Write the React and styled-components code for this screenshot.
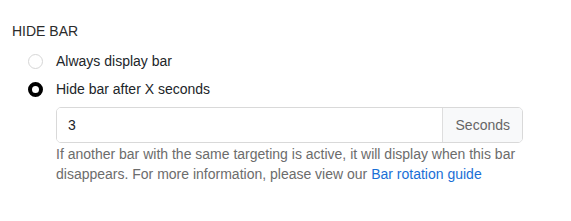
import React from "react";
import styled, { createGlobalStyle } from "styled-components";

const GlobalStyle = createGlobalStyle`
  body {
    margin: 0;
    background: #fff;
    font-family: "Liberation Sans", Arial, sans-serif;
  }
`;

const Section = styled.div`
  padding: 21px 12px 0 12px;
  width: 571px;
  box-sizing: border-box;
`;

const Heading = styled.div`
  font-size: 14px;
  line-height: 20px;
  color: #2b2b2b;
  margin-bottom: 10px;
`;

const Options = styled.div`
  display: flex;
  flex-direction: column;
  gap: 8px;
  padding-left: 16px;
`;

const Option = styled.label`
  display: flex;
  align-items: center;
  gap: 13px;
  font-size: 14px;
  line-height: 20px;
  color: #212529;
  cursor: pointer;
`;

const Radio = styled.span`
  width: 15px;
  height: 15px;
  box-sizing: border-box;
  border-radius: 50%;
  flex-shrink: 0;
  background: #fff;
  border: ${(p) => (p.$checked ? "4px solid #000" : "1px solid #d6d6d6")};
`;

const Detail = styled.div`
  margin: 8px 0 0 44px;
  width: 467px;
`;

const InputGroup = styled.div`
  display: flex;
  height: 36px;
  border: 1px solid #d9d9d9;
  border-radius: 5px;
  box-sizing: border-box;
  overflow: hidden;
`;

const Field = styled.input`
  flex: 1;
  min-width: 0;
  border: none;
  outline: none;
  padding: 0 11px;
  font-family: inherit;
  font-size: 14px;
  color: #212529;
  background: #fff;
`;

const Addon = styled.span`
  display: flex;
  align-items: center;
  padding: 0 12px 0 13px;
  border-left: 1px solid #dedede;
  background: #f8f9fa;
  color: #666;
  font-size: 14px;
`;

const Help = styled.p`
  margin: 0;
  padding-top: 1px;
  font-size: 14px;
  line-height: 20px;
  color: #6c6c6c;
`;

const Link = styled.a`
  color: #1a6fd6;
  text-decoration: none;
`;

export default function App() {
  const [mode, setMode] = React.useState("hide");
  const [secs, setSecs] = React.useState("3");
  return (
    <>
      <GlobalStyle />
      <Section>
        <Heading>HIDE BAR</Heading>
        <Options>
          <Option onClick={() => setMode("always")}>
            <Radio $checked={mode === "always"} />
            Always display bar
          </Option>
          <Option onClick={() => setMode("hide")}>
            <Radio $checked={mode === "hide"} />
            Hide bar after X seconds
          </Option>
        </Options>
        <Detail>
          <InputGroup>
            <Field value={secs} onChange={(e) => setSecs(e.target.value)} />
            <Addon>Seconds</Addon>
          </InputGroup>
          <Help>
            If another bar with the same targeting is active, it will display
            when this bar disappears. For more information, please view our{" "}
            <Link href="#">Bar rotation guide</Link>
          </Help>
        </Detail>
      </Section>
    </>
  );
}
